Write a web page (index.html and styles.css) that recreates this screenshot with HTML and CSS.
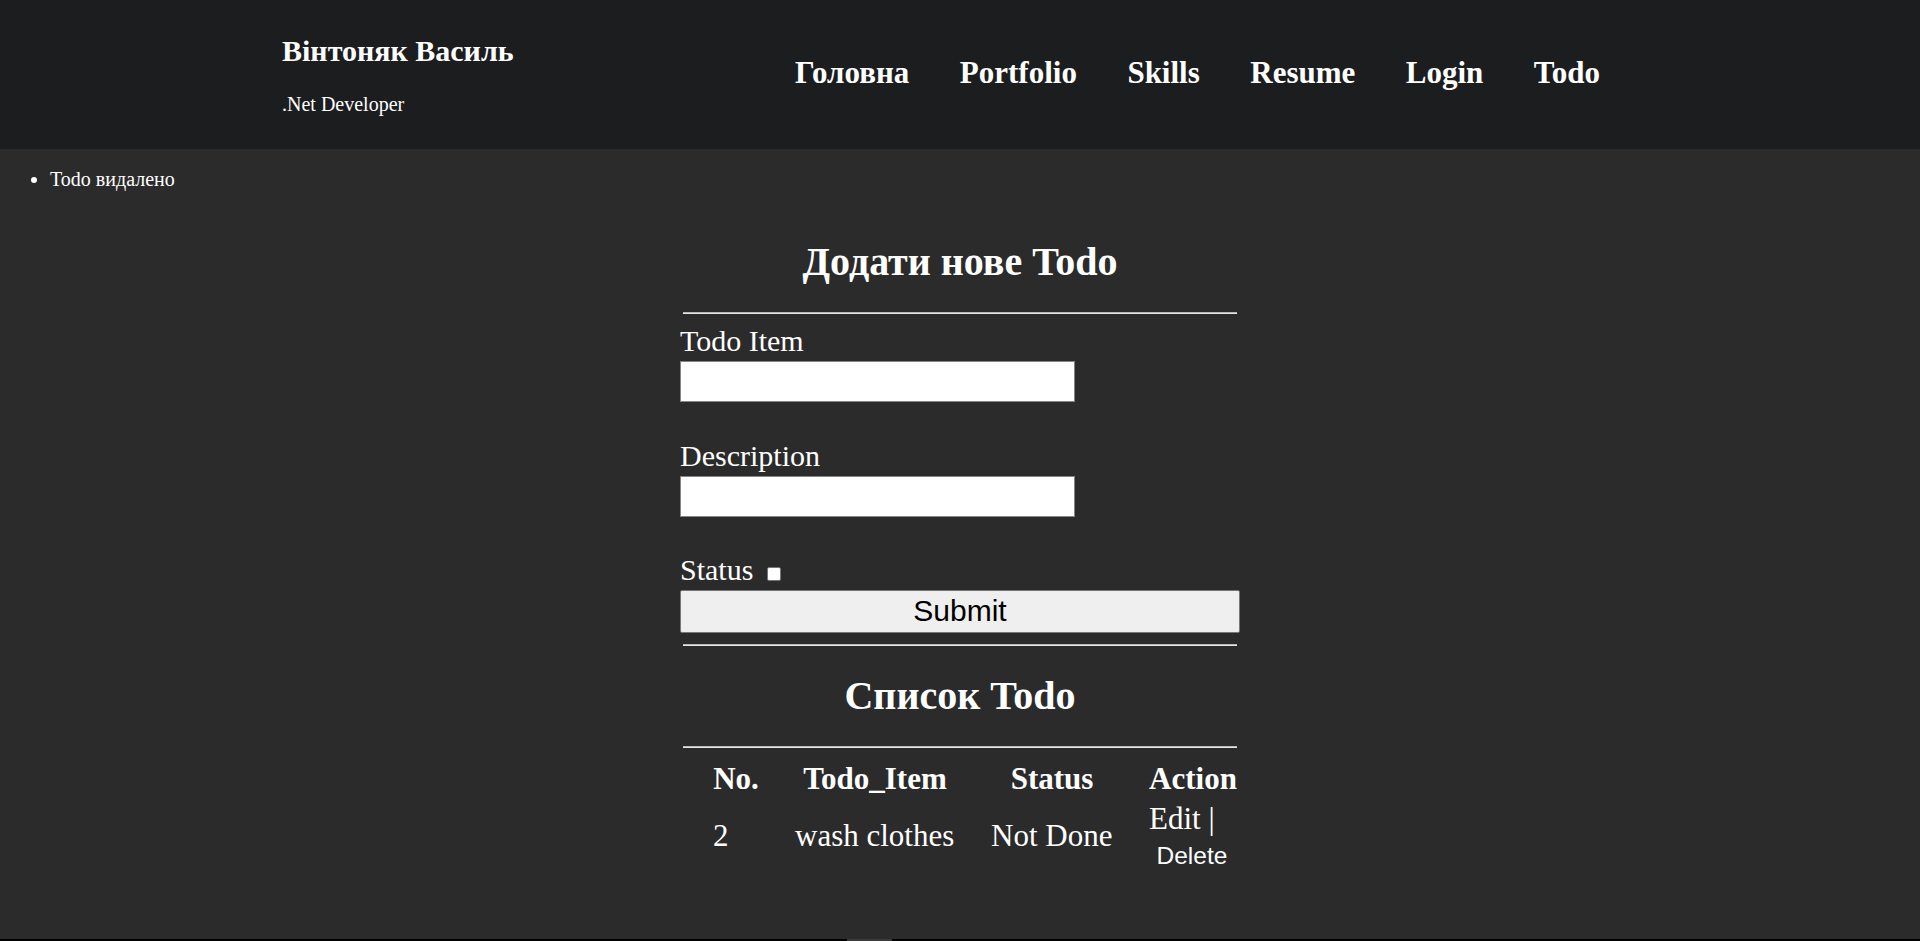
FILE: index.html
```html
<!DOCTYPE html>
<html lang="uk">
<head>
<meta charset="utf-8">
<title>Todo</title>
<link rel="stylesheet" href="styles.css">
</head>
<body>
<header class="site-header">
  <div class="header-inner">
    <div class="brand">
      <h2 class="brand-name">Вінтоняк Василь</h2>
      <p class="brand-role">.Net Developer</p>
    </div>
    <nav class="main-nav">
      <a href="#">Головна</a>
      <a href="#">Portfolio</a>
      <a href="#">Skills</a>
      <a href="#">Resume</a>
      <a href="#">Login</a>
      <a href="#">Todo</a>
    </nav>
  </div>
</header>
<main class="main">
  <ul class="messages">
    <li>Todo видалено</li>
  </ul>
  <section class="todo">
    <h1 class="todo-title">Додати нове Todo</h1>
    <hr class="rule rule-top">
    <form class="todo-form">
      <label class="field-label" for="item">Todo Item</label>
      <input class="field-input" id="item" type="text">
      <label class="field-label field-gap" for="desc">Description</label>
      <input class="field-input" id="desc" type="text">
      <div class="status-line">
        <label for="status">Status</label> <input class="status-check" id="status" type="checkbox">
      </div>
      <button class="submit-btn" type="button">Submit</button>
    </form>
    <hr class="rule rule-mid">
    <h1 class="todo-title">Список Todo</h1>
    <hr class="rule rule-table">
    <table class="todo-table">
      <colgroup>
        <col class="c1"><col class="c2"><col class="c3"><col class="c4">
      </colgroup>
      <thead>
        <tr><th>No.</th><th>Todo_Item</th><th>Status</th><th>Action</th></tr>
      </thead>
      <tbody>
        <tr>
          <td>2</td>
          <td>wash clothes</td>
          <td>Not Done</td>
          <td><a class="edit-link" href="#">Edit</a> | <button class="delete-btn" type="button">Delete</button></td>
        </tr>
      </tbody>
    </table>
  </section>
</main>
<footer class="site-footer">
  <div class="footer-mark"></div>
</footer>
</body>
</html>
```
FILE: styles.css
```css
html, body {
  margin: 0;
  padding: 0;
}
body {
  background: #2b2b2b;
  color: #ffffff;
  font-family: "Liberation Serif", "Times New Roman", serif;
}
a {
  color: #ffffff;
  text-decoration: none;
}

/* header */
.site-header {
  background: #1c1d1f;
  height: 149px;
}
.header-inner {
  display: flex;
  padding-left: 282px;
}
.brand {
  width: 513px;
  padding-top: 34.3px;
}
.brand-name {
  margin: 0;
  font-size: 30px;
  line-height: 34.5px;
  font-weight: bold;
}
.brand-role {
  margin: 24px 0 0;
  font-size: 20px;
  line-height: 23px;
}
.main-nav {
  display: flex;
  gap: 50.5px;
  padding-top: 55px;
  font-size: 31px;
  line-height: 35.6px;
  font-weight: bold;
}

/* main */
.main {
  height: 790px;
  box-sizing: border-box;
  padding-top: 18.5px;
  overflow: hidden;
}
.messages {
  margin: 0;
  padding-left: 50px;
  font-size: 20px;
  line-height: 23px;
}
.todo {
  width: 560px;
  margin: 48px auto 0;
}
.todo-title {
  margin: 0;
  text-align: center;
  font-size: 40px;
  line-height: 46px;
  font-weight: bold;
}
.rule {
  height: 0;
  border: 0;
  border-top: 1px solid #b9b9b9;
  border-bottom: 1px solid #e6e6e6;
  margin: 27.5px 3px 10px;
}
.rule-mid {
  margin: 11px 3px 27px;
}
.rule-table {
  margin: 27.5px 3px 0;
}

/* form */
.todo-form {
  margin: 0;
}
.field-label {
  display: block;
  font-size: 30px;
  line-height: 34.5px;
}
.field-gap {
  margin-top: 37px;
}
.field-input {
  display: block;
  box-sizing: border-box;
  width: 395px;
  height: 41.5px;
  margin: 2px 0 0;
  padding: 1px 3px;
  border: 1px solid #858585;
  background: #ffffff;
  font-family: "Liberation Sans", Arial, sans-serif;
  font-size: 30px;
}
.status-line {
  margin-top: 36px;
  font-size: 30px;
  line-height: 34.5px;
}
.status-check {
  appearance: none;
  -webkit-appearance: none;
  box-sizing: border-box;
  width: 14px;
  height: 14px;
  margin: 0 0 0 6px;
  border: 1px solid #767676;
  border-radius: 2px;
  background: #ffffff;
  vertical-align: -1px;
}
.submit-btn {
  display: block;
  box-sizing: border-box;
  width: 560px;
  height: 43px;
  margin-top: 2px;
  padding: 0;
  border: 1px solid #767676;
  border-radius: 2px;
  background: #efefef;
  color: #000000;
  font-family: "Liberation Sans", Arial, sans-serif;
  font-size: 30px;
}

/* table */
.todo-table {
  table-layout: fixed;
  width: 560px;
  margin: 11px 0 0 15px;
  border-collapse: separate;
  border-spacing: 0;
  font-size: 31px;
  line-height: 35.6px;
}
.c1 { width: 82px; }
.c2 { width: 196px; }
.c3 { width: 158px; }
.c4 { width: 124px; }
.todo-table th,
.todo-table td {
  padding: 2px 18px;
  vertical-align: middle;
}
.todo-table th {
  text-align: center;
  font-weight: bold;
}
.todo-table td {
  text-align: left;
}
.delete-btn {
  padding: 1px 7.5px;
  border: 0;
  background: transparent;
  color: #ffffff;
  font-family: "Liberation Sans", Arial, sans-serif;
  font-size: 24.5px;
  line-height: normal;
}

/* footer */
.site-footer {
  height: 40px;
  background: #000000;
  display: flex;
}
.footer-mark {
  width: 45px;
  height: 30px;
  margin-left: 847px;
  background: #3a3a3a;
}
```
